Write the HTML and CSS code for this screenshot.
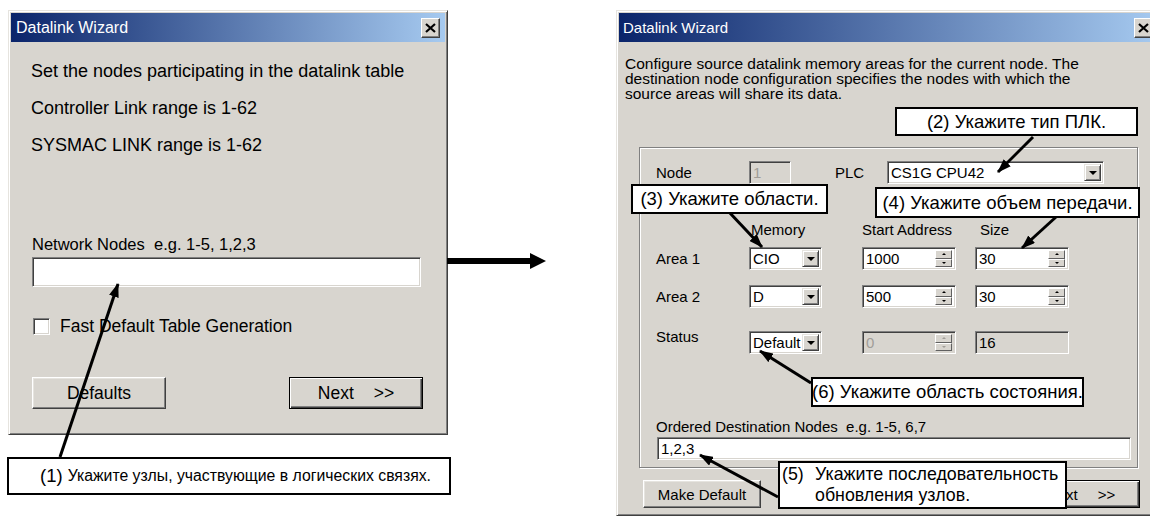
FILE: index.html
```html
<!DOCTYPE html>
<html lang="ru">
<head>
    <meta charset="UTF-8">
    <title>Datalink Wizard</title>
    <link rel="stylesheet" href="styles.css">
</head>
<body>
<div class="canvas">

    <!-- step 1: nodes -->
    <section class="window window-nodes">
        <div class="titlebar">
            <span class="title">Datalink Wizard</span>
            <span class="close"><svg width="11" height="10" viewBox="0 0 11 10"><path d="M1 1 L10 9 M10 1 L1 9" stroke="#000" stroke-width="2.2"/></svg></span>
        </div>
        <div class="nodes-body">
            <p class="lead">Set the nodes participating in the datalink table</p>
            <p class="lead">Controller Link range is 1-62</p>
            <p class="lead">SYSMAC LINK range is 1-62</p>
            <div class="nodes-label">Network Nodes&nbsp; e.g. 1-5, 1,2,3</div>
            <div class="field nodes-input"></div>
            <div class="check-row"><span class="field checkbox"></span>Fast Default Table Generation</div>
            <div class="button-row">
                <span class="btn">Defaults</span>
                <span class="btn btn-default"><span>Next</span><span>&gt;&gt;</span></span>
            </div>
        </div>
    </section>

    <!-- step 2: memory areas -->
    <section class="window window-areas">
        <div class="titlebar">
            <span class="title">Datalink Wizard</span>
            <span class="close"><svg width="11" height="10" viewBox="0 0 11 10"><path d="M1 1 L10 9 M10 1 L1 9" stroke="#000" stroke-width="2.2"/></svg></span>
        </div>
        <div class="areas-body">
            <p class="intro">Configure source datalink memory areas for the current node. The<br>destination node configuration specifies the nodes with which the<br>source areas will share its data.</p>

            <div class="group">
                <div class="node-row">
                    <span class="lbl-node">Node</span>
                    <span class="field disabled node-id">1</span>
                    <span class="lbl-plc">PLC</span>
                    <span class="field select plc-select"><span class="value">CS1G CPU42</span><span class="drop"></span></span>
                </div>

                <div class="area-row head-row">
                    <span></span>
                    <span class="col-mem">Memory</span>
                    <span>Start Address</span>
                    <span class="col-size">Size</span>
                </div>

                <div class="area-row row-1">
                    <span>Area 1</span>
                    <span class="field select mem"><span class="value">CIO</span><span class="drop"></span></span>
                    <span class="field spin"><span class="value">1000</span><span class="spin-btns"><span class="up"></span><span class="down"></span></span></span>
                    <span class="field spin"><span class="value">30</span><span class="spin-btns"><span class="up"></span><span class="down"></span></span></span>
                </div>

                <div class="area-row row-2">
                    <span>Area 2</span>
                    <span class="field select mem"><span class="value">D</span><span class="drop"></span></span>
                    <span class="field spin"><span class="value">500</span><span class="spin-btns"><span class="up"></span><span class="down"></span></span></span>
                    <span class="field spin"><span class="value">30</span><span class="spin-btns"><span class="up"></span><span class="down"></span></span></span>
                </div>

                <div class="area-row row-status">
                    <span class="lbl-status">Status</span>
                    <span class="field select mem"><span class="value">Default</span><span class="drop"></span></span>
                    <span class="field spin disabled"><span class="value">0</span><span class="spin-btns"><span class="up"></span><span class="down"></span></span></span>
                    <span class="field readonly size-box">16</span>
                </div>

                <div class="dest-label">Ordered Destination Nodes&nbsp; e.g. 1-5, 6,7</div>
                <div class="field dest-input">1,2,3</div>
            </div>

            <div class="areas-buttons">
                <span class="btn">Make Default</span>
                <span class="btn btn-default"><span>Next</span><span>&gt;&gt;</span></span>
            </div>
        </div>
    </section>

    <svg class="arrows" width="1150" height="519" viewBox="0 0 1150 519">
        <defs>
            <marker id="head" markerUnits="userSpaceOnUse" markerWidth="14" markerHeight="10" refX="13" refY="5" orient="auto">
                <path d="M0 0 L14 5 L0 10 Z" fill="#000"/>
            </marker>
        </defs>
        <g stroke="#000" stroke-width="3" fill="none" marker-end="url(#head)">
            <line x1="60" y1="457" x2="118" y2="284"/>
            <line x1="1033" y1="137" x2="998" y2="172"/>
            <line x1="729" y1="212" x2="762" y2="247"/>
            <line x1="1056" y1="217" x2="1022" y2="248"/>
            <line x1="811" y1="383" x2="760" y2="351"/>
            <line x1="778" y1="497" x2="700" y2="455"/>
        </g>
        <line x1="447" y1="261" x2="533" y2="261" stroke="#000" stroke-width="6"/>
        <path d="M530 253 L546 261 L530 269 Z" fill="#000"/>
    </svg>

    <div class="callout c1"><span class="num">(1)</span>Укажите узлы, участвующие в логических связях.</div>
    <div class="callout c2">(2) Укажите тип ПЛК.</div>
    <div class="callout c3">(3) Укажите области.</div>
    <div class="callout c4">(4) Укажите объем передачи.</div>
    <div class="callout c6">(6) Укажите область состояния.</div>
    <div class="callout c5">
        <span>(5)</span><span>Укажите последовательность</span>
        <span></span><span>обновления узлов.</span>
    </div>

</div>
</body>
</html>
```

FILE: styles.css
```css
* {
    box-sizing: border-box;
}

body {
    margin: 0;
    background: #fff;
    color: #000;
    font-family: "Liberation Sans", Arial, sans-serif;
    overflow: hidden;
}

.canvas {
    position: relative;
    width: 1150px;
    height: 519px;
    overflow: hidden;
}

/* windows */
.window {
    position: absolute;
    display: flex;
    flex-direction: column;
    padding: 2px;
    background: #d8d5cf;
    border: 1px solid;
    border-color: #e6e4df #404040 #404040 #e6e4df;
    box-shadow: inset 1px 1px #fff, inset -1px -1px #808080;
}

.window-nodes {
    left: 8px;
    top: 10px;
    width: 440px;
    height: 425px;
}

.window-areas {
    left: 616px;
    top: 10px;
    width: 545px;
    height: 506px;
}

.titlebar {
    display: flex;
    align-items: center;
    justify-content: space-between;
    height: 29px;
    padding: 0 5px;
    background: linear-gradient(to right, #0a246a, #a6caf0);
    color: #fff;
}

.title {
    font-size: 16px;
}

.window-areas .title {
    font-size: 15px;
    margin-left: -1px;
}

.close {
    display: flex;
    align-items: center;
    justify-content: center;
    width: 19px;
    height: 20px;
    background: #d8d5cf;
    border: 1px solid;
    border-color: #fff #404040 #404040 #fff;
    box-shadow: inset -1px -1px #808080;
}

/* common controls */
.field {
    background: #fff;
    border: 1px solid;
    border-color: #808080 #fff #fff #808080;
    box-shadow: inset 1px 1px #404040, inset -1px -1px #d8d5cf;
}

.field.disabled,
.field.readonly {
    background: #d8d5cf;
}

.field.disabled {
    color: #a09d98;
}

.btn {
    display: flex;
    align-items: center;
    justify-content: center;
    background: #d8d5cf;
    border: 1px solid;
    border-color: #fff #404040 #404040 #fff;
    box-shadow: inset -1px -1px #808080, inset 1px 1px #e6e4df;
}

.btn-default {
    gap: 20px;
    border: 1px solid #000;
    box-shadow: inset 1px 1px #fff, inset -1px -1px #404040, inset -2px -2px #808080;
}

/* step 1 */
.nodes-body {
    display: flex;
    flex-direction: column;
    padding: 19px 24px 0 20px;
}

.lead {
    margin: 0 0 17px;
    font-size: 18px;
    line-height: 20px;
}

.nodes-label {
    margin: 62px 0 0 1px;
    font-size: 16.5px;
    line-height: 20px;
}

.nodes-input {
    margin: 3px 0 0 1px;
    height: 30px;
}

.check-row {
    display: flex;
    align-items: center;
    gap: 10px;
    margin-top: 29px;
    height: 20px;
    font-size: 17.5px;
}

.checkbox {
    width: 17px;
    height: 17px;
    margin-left: 2px;
}

.button-row {
    display: flex;
    justify-content: space-between;
    margin: 41px -2px 0 1px;
}

.button-row .btn {
    width: 134px;
    height: 32px;
    font-size: 17.5px;
}

/* step 2 */
.areas-body {
    display: flex;
    flex-direction: column;
    padding: 14px 0 0 6px;
    font-size: 15px;
}

.intro {
    margin: 0;
    font-size: 15.5px;
    line-height: 15px;
}

.group {
    display: flex;
    flex-direction: column;
    width: 499px;
    margin: 46px 0 0 14px;
    padding: 13px 6px 7px 16px;
    border: 1px solid #808080;
    box-shadow: inset 1px 1px #fff, 1px 1px #fff;
}

.node-row {
    display: flex;
    align-items: center;
    height: 23px;
}

.lbl-node {
    width: 93px;
}

.node-id {
    display: flex;
    align-items: center;
    width: 42px;
    height: 23px;
    padding-left: 3px;
}

.lbl-plc {
    width: 52px;
    margin-left: 44px;
}

.select,
.spin {
    display: flex;
    align-items: center;
    height: 23px;
    padding: 2px;
}

.select .value,
.spin .value {
    flex: 1;
    padding-left: 1px;
}

.plc-select {
    width: 217px;
}

.drop {
    display: flex;
    align-items: center;
    justify-content: center;
    width: 17px;
    height: 100%;
    background: #d8d5cf;
    border: 1px solid;
    border-color: #e6e4df #404040 #404040 #e6e4df;
    box-shadow: inset 1px 1px #fff, inset -1px -1px #808080;
}

.drop::before {
    content: "";
    border-left: 4px solid transparent;
    border-right: 4px solid transparent;
    border-top: 4px solid #000;
}

.area-row {
    display: grid;
    grid-template-columns: 93px 113px 113px 94px;
    align-items: center;
    height: 23px;
}

.head-row {
    margin-top: 35px;
    height: 20px;
}

.col-mem {
    padding-left: 2px;
}

.col-size {
    padding-left: 5px;
}

.row-1 {
    margin-top: 8px;
}

.row-2 {
    margin-top: 15px;
}

.row-status {
    margin-top: 23px;
}

.lbl-status {
    align-self: start;
    margin-top: -4px;
    line-height: 20px;
}

.mem {
    width: 73px;
}

.spin {
    width: 94px;
}

.spin-btns {
    display: flex;
    flex-direction: column;
    width: 17px;
    height: 100%;
    margin-right: 1px;
}

.spin-btns span {
    flex: 1;
    display: flex;
    align-items: center;
    justify-content: center;
    background: #d8d5cf;
    border: 1px solid;
    border-color: #fff #606060 #606060 #fff;
}

.spin-btns .up::before {
    content: "";
    border-left: 2px solid transparent;
    border-right: 2px solid transparent;
    border-bottom: 2px solid #000;
}

.spin-btns .down::before {
    content: "";
    border-left: 2px solid transparent;
    border-right: 2px solid transparent;
    border-top: 2px solid #000;
}

.spin.disabled .spin-btns span::before {
    border-top-color: #a09d98;
    border-bottom-color: #a09d98;
}

.size-box {
    display: flex;
    align-items: center;
    width: 94px;
    height: 23px;
    padding-left: 3px;
}

.dest-label {
    margin-top: 63px;
    line-height: 20px;
}

.dest-input {
    display: flex;
    align-items: center;
    height: 23px;
    margin-left: 1px;
    padding-left: 3px;
}

.areas-buttons {
    display: flex;
    justify-content: space-between;
    width: 515px;
    margin-top: 12px;
    padding-left: 18px;
}

.areas-buttons .btn {
    width: 118px;
    height: 28px;
}

/* annotations */
.arrows {
    position: absolute;
    left: 0;
    top: 0;
}

.callout {
    position: absolute;
    display: flex;
    align-items: center;
    justify-content: center;
    background: #fff;
    border: 2px solid #000;
    font-size: 18.5px;
    white-space: nowrap;
}

.c1 {
    left: 7px;
    top: 457px;
    width: 444px;
    height: 38px;
    justify-content: flex-start;
    padding-left: 31px;
    font-size: 15.8px;
}

.c1 .num {
    margin-right: 5px;
    font-size: 18.5px;
}

.c2 {
    left: 895px;
    top: 107px;
    width: 243px;
    height: 29px;
}

.c3 {
    left: 631px;
    top: 184px;
    width: 197px;
    height: 30px;
}

.c4 {
    left: 875px;
    top: 187px;
    width: 265px;
    height: 31px;
}

.c6 {
    left: 811px;
    top: 377px;
    width: 273px;
    height: 30px;
}

.c5 {
    left: 778px;
    top: 461px;
    width: 289px;
    height: 48px;
    display: grid;
    grid-template-columns: 33px auto;
    align-content: center;
    justify-content: start;
    padding-left: 2px;
    font-size: 17.8px;
    line-height: 21px;
}
```
